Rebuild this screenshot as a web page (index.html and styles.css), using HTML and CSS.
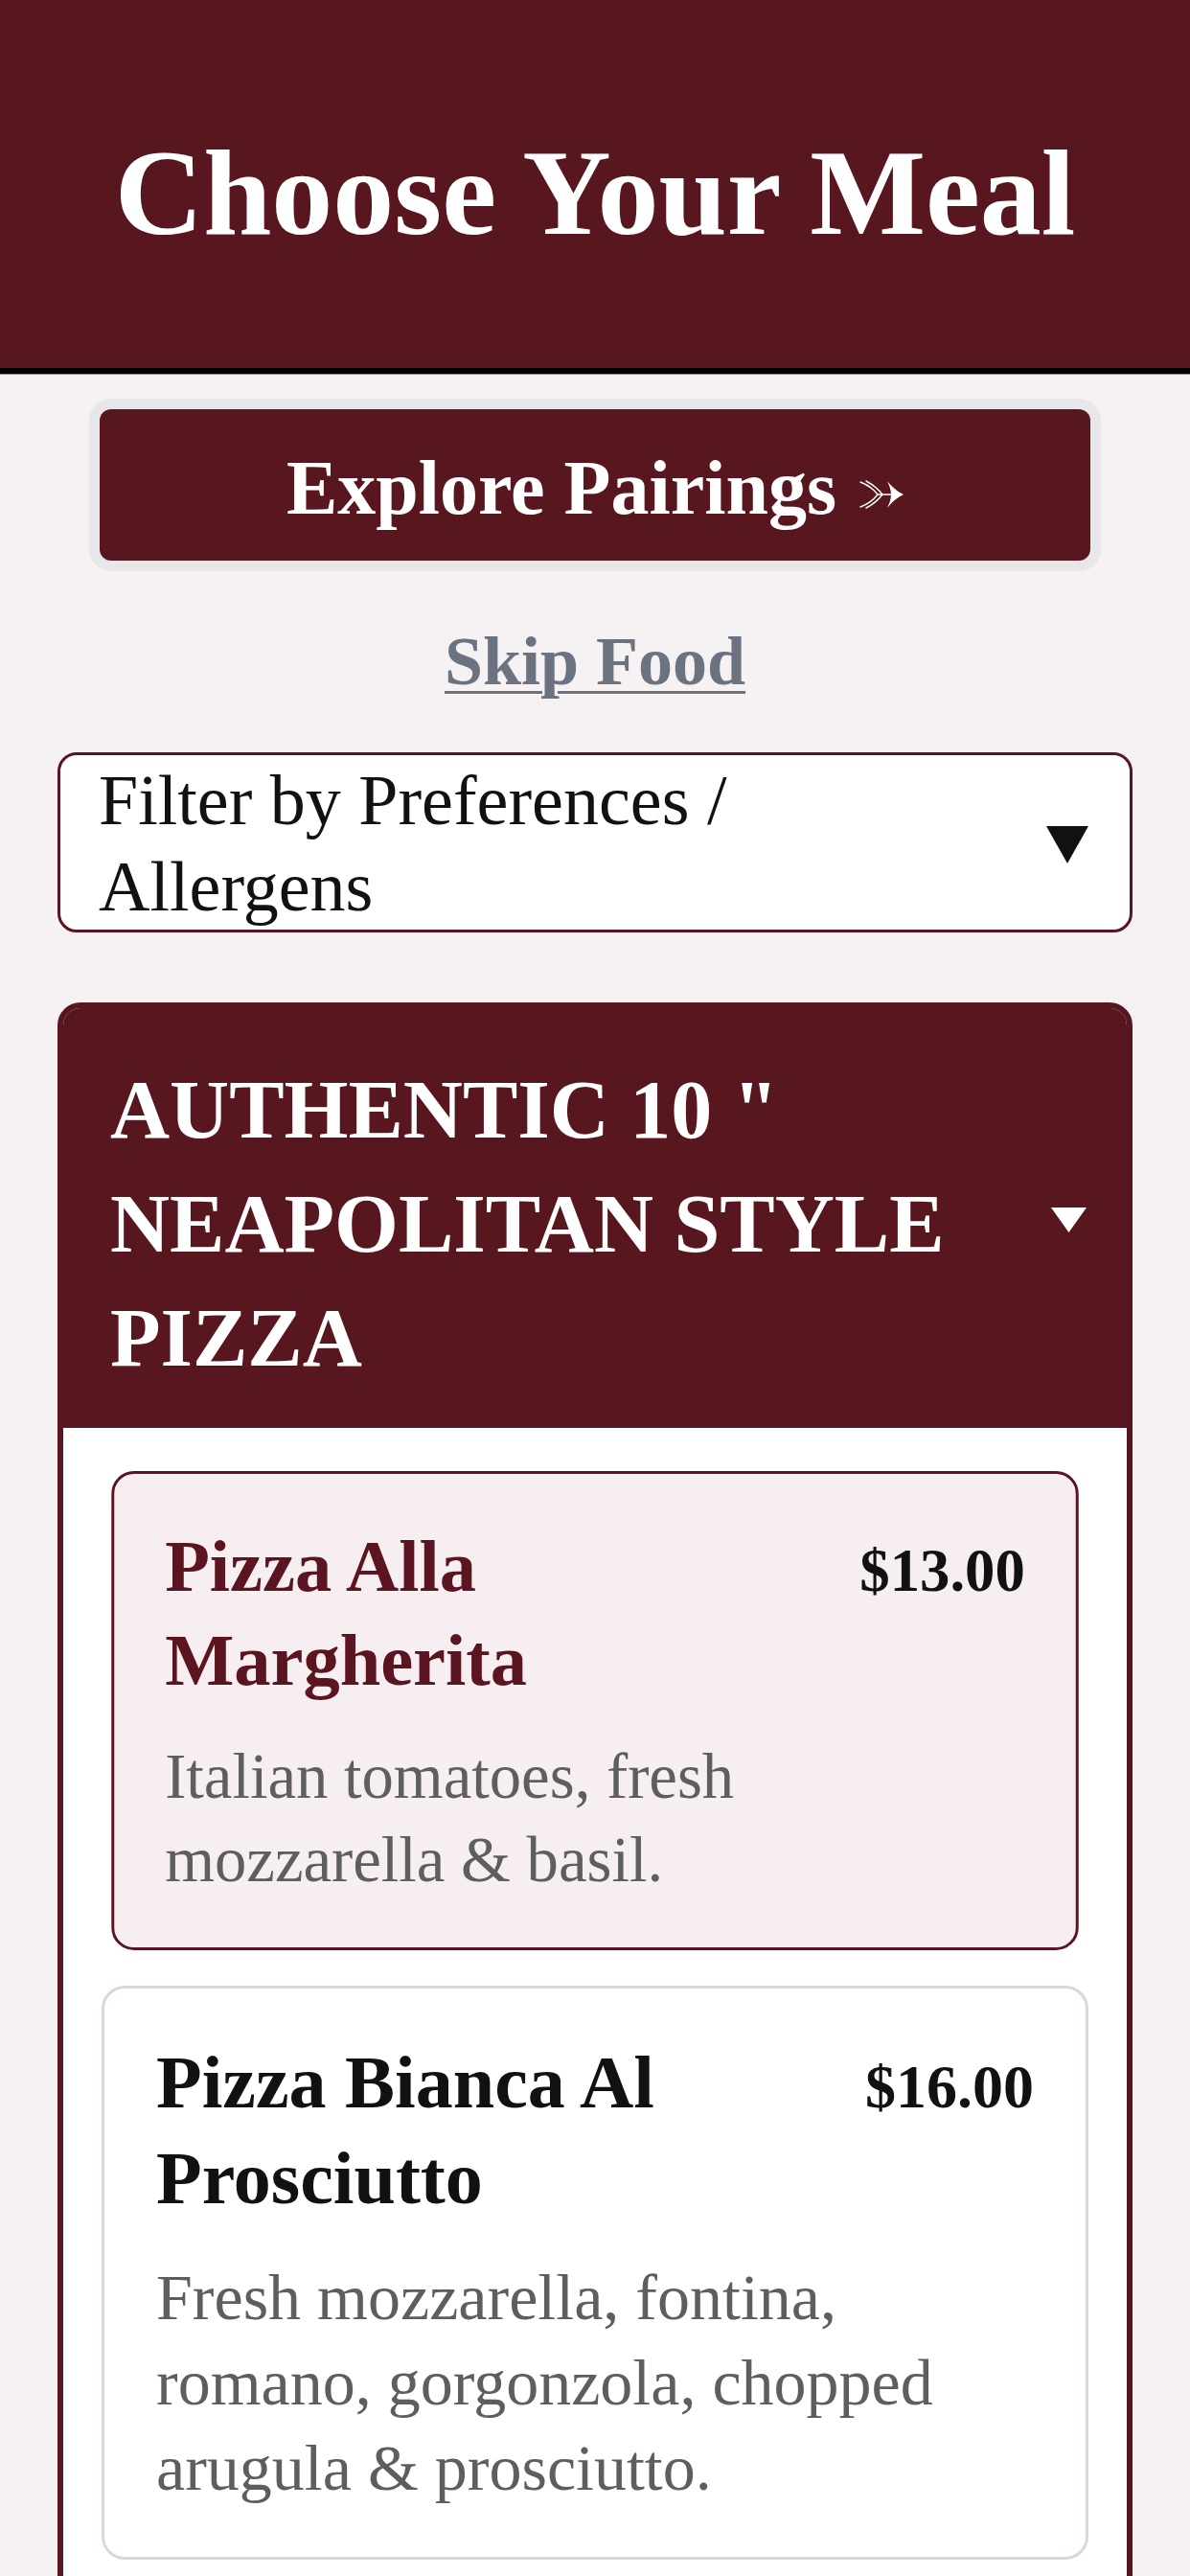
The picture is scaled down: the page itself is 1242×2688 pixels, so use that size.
FILE: index.html
```html
<!DOCTYPE html>
<html lang="en">
<head>
<meta charset="utf-8">
<title>Choose Your Meal</title>
<link rel="stylesheet" href="styles.css">
</head>
<body>
<header class="hero">
  <h1 class="hero-title">Choose Your Meal</h1>
</header>
<main class="content">
  <button class="cta" type="button">
    <span>Explore Pairings</span>
    <svg class="cta-arrow" width="46" height="30" viewBox="0 0 46 30" aria-hidden="true">
      <path d="M1 2 Q12 6 19 15 M7 1 Q17 6 24 15 M1 28 Q12 24 19 15 M7 29 Q17 24 24 15 M19 15 H34" fill="none" stroke="#fff" stroke-width="1.4" stroke-linecap="round"/>
      <path d="M29 1 Q37 11 46 15 Q37 19 29 29 Q33 21 33 15 Q33 9 29 1 Z" fill="#fff"/>
    </svg>
  </button>
  <a class="skip" href="#">Skip Food</a>
  <div class="filter">
    <span class="filter-label">Filter by Preferences / Allergens</span>
    <svg class="filter-caret" width="44" height="39" viewBox="0 0 44 39" aria-hidden="true">
      <path d="M0 0 H44 L22 39 Z" fill="#111"/>
    </svg>
  </div>
  <section class="category">
    <div class="category-head">
      <h2 class="category-title">AUTHENTIC 10 " NEAPOLITAN STYLE PIZZA</h2>
      <svg class="category-caret" width="37" height="26" viewBox="0 0 37 26" aria-hidden="true">
        <path d="M0 0 H37 L18.5 26 Z" fill="#fff"/>
      </svg>
    </div>
    <div class="category-body">
      <article class="item item-selected">
        <div class="item-top">
          <h3 class="item-name">Pizza Alla Margherita</h3>
          <span class="item-price">$13.00</span>
        </div>
        <p class="item-desc">Italian tomatoes, fresh mozzarella &amp; basil.</p>
      </article>
      <article class="item">
        <div class="item-top">
          <h3 class="item-name">Pizza Bianca Al Prosciutto</h3>
          <span class="item-price">$16.00</span>
        </div>
        <p class="item-desc">Fresh mozzarella, fontina, romano, gorgonzola, chopped arugula &amp; prosciutto.</p>
      </article>
    </div>
  </section>
</main>
</body>
</html>
```
FILE: styles.css
```css
* { box-sizing: border-box; }

body {
  margin: 0;
  background: #f6f2f3;
  font-family: "Liberation Serif", "Times New Roman", serif;
  color: #111;
}

.hero {
  height: 390px;
  background: #58171f;
  border-bottom: 6px solid #000;
  box-shadow: 0 1px 0 #8c8c8c;
  display: flex;
  align-items: center;
  justify-content: center;
  padding-top: 20px;
}

.hero-title {
  margin: 0;
  color: #fff;
  font-size: 128px;
  font-weight: 700;
  line-height: 1.15;
}

.content {
  padding: 0 60px;
  display: flex;
  flex-direction: column;
}

.cta {
  margin: 37px 44px 0;
  height: 158px;
  border: 0;
  border-radius: 12px;
  background: #58171f;
  box-shadow: 0 0 0 11px #e6e6eb;
  color: #fff;
  font-family: inherit;
  font-size: 80px;
  font-weight: 700;
  display: flex;
  align-items: center;
  justify-content: center;
  gap: 24px;
  padding: 6px 0 0;
}

.cta-arrow {
  margin-top: 14px;
}

.skip {
  align-self: center;
  margin-top: 64px;
  color: #6b7280;
  font-size: 72px;
  font-weight: 700;
  line-height: 1.15;
  text-decoration: underline;
  text-decoration-thickness: 3px;
  text-underline-offset: 7px;
}

.filter {
  margin-top: 53px;
  background: #fff;
  border: 3px solid #5a1520;
  border-radius: 20px;
  padding: 2px 43px 0 40px;
  display: flex;
  align-items: center;
  justify-content: space-between;
}

.filter-label {
  max-width: 860px;
  font-size: 74px;
  line-height: 90px;
  color: #111;
}

.filter-caret {
  flex: none;
  margin-top: 4px;
}

.category {
  margin-top: 73px;
  border: 6px solid #58171f;
  border-radius: 24px;
  overflow: hidden;
}

.category-head {
  background: #58171f;
  padding: 47px 42px 34px 49px;
  display: flex;
  align-items: center;
  justify-content: space-between;
}

.category-title {
  margin: 0;
  max-width: 940px;
  color: #fff;
  font-size: 86px;
  font-weight: 700;
  line-height: 119px;
}

.category-caret {
  flex: none;
  margin-top: -8px;
}

.category-body {
  background: #fff;
  padding: 40px;
  display: flex;
  flex-direction: column;
  gap: 32px;
}

.item {
  border: 3px solid #ddd6d9;
  border-radius: 24px;
  background: #fff;
  padding: 48px 54px;
}

.item-selected {
  background: #f7eef1;
  border-color: #5a1520;
  transform: scale(0.98);
}

.item-top {
  display: flex;
  align-items: baseline;
  justify-content: space-between;
  gap: 40px;
}

.item-name {
  margin: 0;
  max-width: 690px;
  font-size: 78px;
  font-weight: 700;
  line-height: 100px;
  color: #111;
}

.item-selected .item-name {
  color: #5a1520;
}

.item-price {
  flex: none;
  font-size: 64px;
  font-weight: 700;
  color: #111;
}

.item-desc {
  margin: 30px 0 0;
  font-size: 68px;
  line-height: 89px;
  color: #5e5e5e;
}
```
